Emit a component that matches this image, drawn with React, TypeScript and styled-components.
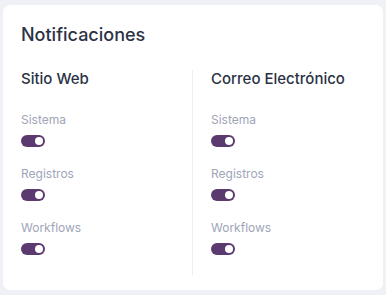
import React from "react";
import styled, { createGlobalStyle } from "styled-components";

const Global = createGlobalStyle`
  html, body { margin: 0; padding: 0; background: #f0f1f6; }
  body { font-family: Inter, "Noto Sans", sans-serif; -webkit-font-smoothing: antialiased; }
`;

const Page = styled.div`
  padding: 5px 3px;
  width: 386px;
  box-sizing: border-box;
`;

const Card = styled.section`
  background: #ffffff;
  border-radius: 7px;
  padding: 18px 18px 17px;
  height: 285px;
  box-sizing: border-box;
`;

const Title = styled.h2`
  margin: 0 0 23px;
  font-size: 18px;
  font-weight: 500;
  line-height: 24px;
  color: #2b3245;
`;

const Columns = styled.div`
  display: grid;
  grid-template-columns: 1fr 1fr;
`;

const Column = styled.div<{ $first?: boolean }>`
  padding-left: ${(p) => (p.$first ? "0" : "18px")};
  border-right: ${(p) => (p.$first ? "1px solid #eceef3" : "none")};
  padding-bottom: 20px;
`;

const ColumnTitle = styled.h3`
  margin: 0 0 24px;
  font-size: 15px;
  font-weight: 500;
  line-height: 18px;
  color: #2b3245;
`;

const Item = styled.div`
  display: flex;
  flex-direction: column;
  gap: 8px;
  margin-bottom: 19px;
  &:last-child { margin-bottom: 0; }
`;

const Label = styled.span`
  font-size: 12px;
  line-height: 15px;
  color: #a0a5b8;
`;

const Toggle = styled.span`
  position: relative;
  display: block;
  width: 24px;
  height: 12px;
  border-radius: 6px;
  background: #5b3a6f;
  box-sizing: border-box;
`;

const Knob = styled.span`
  position: absolute;
  top: 2px;
  right: 2px;
  width: 8px;
  height: 8px;
  border-radius: 50%;
  background: #ffffff;
`;

const items = ["Sistema", "Registros", "Workflows"];

function Group({ title, first }: { title: string; first?: boolean }) {
  return (
    <Column $first={first}>
      <ColumnTitle>{title}</ColumnTitle>
      {items.map((it) => (
        <Item key={it}>
          <Label>{it}</Label>
          <Toggle role="switch" aria-checked="true">
            <Knob />
          </Toggle>
        </Item>
      ))}
    </Column>
  );
}

export default function App() {
  return (
    <>
      <Global />
      <Page>
        <Card>
          <Title>Notificaciones</Title>
          <Columns>
            <Group title="Sitio Web" first />
            <Group title="Correo Electrónico" />
          </Columns>
        </Card>
      </Page>
    </>
  );
}
